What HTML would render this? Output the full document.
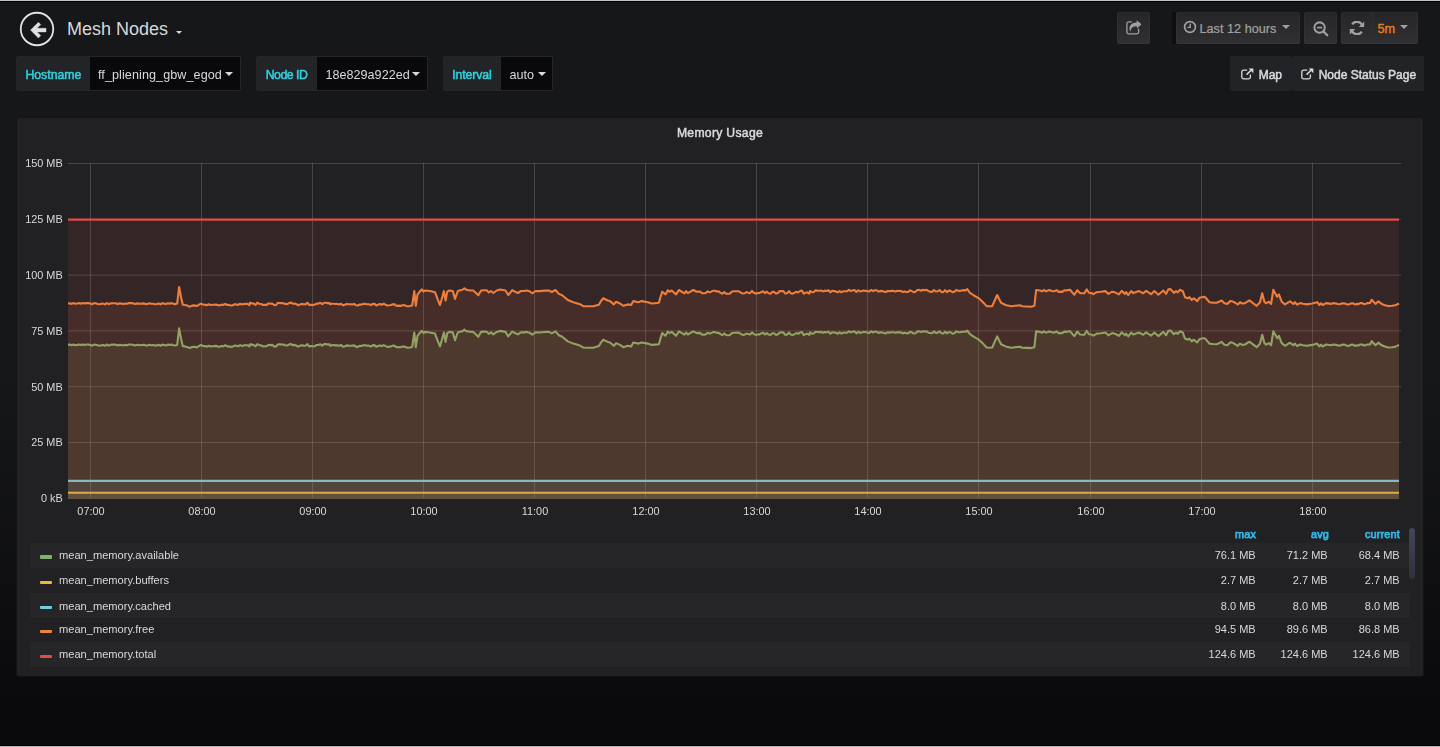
<!DOCTYPE html>
<html lang="en"><head><meta charset="utf-8"><title>Grafana - Mesh Nodes</title>
<style>
*{box-sizing:border-box;margin:0;padding:0}
html,body{width:1440px;height:747px;overflow:hidden}
body{position:relative;font-family:"Liberation Sans", sans-serif;color:#d8d9da;background:linear-gradient(to bottom,#161719 0px,#161719 380px,#0a0a0c 705px,#0a0a0c 747px);-webkit-font-smoothing:auto}
.abs{position:absolute}
.edge{position:absolute;left:0;width:1440px;height:1px}
.btn{position:absolute;height:32px;top:12px;border-radius:2px;box-shadow:inset 0 0 0 1px rgba(255,255,255,0.03);background:linear-gradient(to bottom,#262628,#303032);color:#a2a2a2;-webkit-text-stroke:0.2px #a2a2a2;font-size:12.7px;white-space:nowrap}
.btn span,.btn svg{position:absolute}
.var{will-change:transform;position:absolute;top:56px;height:35px;border:1px solid #262628;border-radius:2px;background:#232428;white-space:nowrap}
.var .lab{position:absolute;top:0;left:0;height:33px;line-height:37px;color:#32d1df;font-size:12.3px;-webkit-text-stroke:0.5px #32d1df}
.var .val{position:absolute;top:0;right:0;height:33px;background:#09090b;line-height:37px;font-size:12.6px;color:#d8d9da}
.var .val span{position:absolute;top:0}
.caret{position:absolute;width:0;height:0;border-left:4.5px solid transparent;border-right:4.5px solid transparent;border-top:4.5px solid #d8d9da}
.lnk{will-change:transform;position:absolute;top:56px;height:35px;background:#222326;color:#d8d9da;font-size:12px;-webkit-text-stroke:0.5px #d8d9da;white-space:nowrap;border-radius:2px}
.lnk span,.lnk svg{position:absolute}
#panel{position:absolute;left:16px;top:117px;width:1408px;height:560px;background:#212124;border:1px solid #131316;border-radius:3px}
.yl{position:absolute;left:0;width:62.7px;text-align:right;font-size:10.9px;will-change:transform;line-height:14px;color:#d8d9da;white-space:nowrap}
.xl{position:absolute;top:504px;width:40px;text-align:center;font-size:10.9px;will-change:transform;line-height:14px;color:#d8d9da;white-space:nowrap}
.lr{will-change:transform;position:absolute;left:30px;width:1379.6px;height:24.6px;font-size:11px;line-height:24.6px;color:#d8d9da;white-space:nowrap}
.lr i{position:absolute;left:10px;width:12px;height:3.2px;border-radius:1px}
.lr .ln{position:absolute;left:29px;font-size:11.1px}
.lr .lv{position:absolute}
.lh{will-change:transform;position:absolute;top:527px;font-size:10.9px;line-height:14px;-webkit-text-stroke:0.75px #33b5e5;letter-spacing:0.15px;color:#33b5e5}
</style></head><body>
<div class="edge" style="top:0;background:#c4c4c4"></div>
<div class="edge" style="top:1px;background:#000"></div>
<div class="edge" style="top:745px;background:#000"></div>
<div class="edge" style="top:746px;background:#b9b9b9"></div>

<!-- navbar -->
<svg class="abs" style="left:18px;top:10px" width="38" height="38" viewBox="0 0 38 38"><circle cx="19" cy="19" r="16.25" fill="none" stroke="#e3e3e3" stroke-width="1.8"/><path d="M12.6 20.1 L20.4 12.3 L22.7 14.6 L19.0 18.3 L28.0 18.3 L28.0 21.9 L19.0 21.9 L22.7 25.6 L20.4 27.9 Z" fill="#e0e0e0" stroke="#e0e0e0" stroke-width="0.5" stroke-linejoin="round"/></svg>
<div class="abs" id="title" style="left:67px;top:18px;font-size:18px;line-height:22px;color:#d8d9da;white-space:nowrap">Mesh Nodes</div>
<div class="caret" style="left:175.6px;top:30.5px;border-left-width:3.2px;border-right-width:3.2px;border-top-width:3.2px"></div>

<div class="btn" style="left:1117px;width:33px">
<svg style="left:8.6px;top:7.7px" width="16" height="15" viewBox="0 0 16 15"><path d="M10.7 0.2 L15.5 4.3 L10.9 8.4 L10.9 6.2 C7.5 6.2 5 7 4.3 11.8 C2.2 7 4.5 2.5 10.7 2.4 Z" fill="#a0a0a0"/><path d="M5.4 1.85 H2.8 A1.9 1.9 0 0 0 0.9 3.75 V12 A1.9 1.9 0 0 0 2.8 13.9 H10.7 A1.9 1.9 0 0 0 12.6 12 V9.2" fill="none" stroke="#a0a0a0" stroke-width="1.3" stroke-linecap="round"/></svg>
</div>
<div class="abs" style="left:1172px;top:12px;width:4px;height:32px;background:#0e0e10"></div>
<div class="btn" style="left:1176px;width:124px">
<svg style="left:6.8px;top:8.3px" width="14" height="14" viewBox="0 0 14 14"><circle cx="7" cy="7" r="5.4" fill="none" stroke="#a0a0a0" stroke-width="1.7"/><path d="M7.2 3.8 V7.4 H4.4" fill="none" stroke="#a0a0a0" stroke-width="1.4"/></svg>
<span id="t12" style="left:23.5px;top:1px;line-height:32px">Last 12 hours</span>
<div class="caret" style="left:106px;top:12.6px;border-top-color:#a0a0a0"></div>
</div>
<div class="btn" style="left:1304px;width:33px">
<svg style="left:8.6px;top:8.6px" width="17" height="17" viewBox="0 0 16 16"><circle cx="6.2" cy="6.2" r="4.9" fill="none" stroke="#a0a0a0" stroke-width="1.9"/><path d="M9.9 9.9 L13.4 13.4" stroke="#a0a0a0" stroke-width="2.2" stroke-linecap="round"/><path d="M3.8 6.2 H8.6" stroke="#a0a0a0" stroke-width="1.6"/></svg>
</div>
<div class="btn" style="left:1341px;width:77px">
<div class="abs" style="left:31px;top:0;width:1px;height:32px;background:#2f2f32"></div>
<svg style="left:7.7px;top:8.6px" width="16" height="14" viewBox="0 0 16 14"><g fill="none" stroke="#a0a0a0" stroke-width="2.3"><path d="M13.4 5.2 A5.6 5.6 0 0 0 3.2 3.4"/><path d="M2.6 8.8 A5.6 5.6 0 0 0 12.8 10.6"/></g><path d="M15.2 0.6 V6 H9.8 Z M0.8 13.4 V8 H6.2 Z" fill="#a0a0a0"/></svg>
<span id="t5m" style="left:36.5px;top:1px;line-height:32px;color:#ee7d1a;-webkit-text-stroke:0.35px #ee7d1a">5m</span>
<div class="caret" style="left:59.1px;top:12.6px;border-top-color:#a0a0a0"></div>
</div>

<!-- submenu -->
<div class="var" style="left:16px;width:225px"><div class="lab" style="width:73px"><span id="vl1" style="position:absolute;left:8.4px">Hostname</span></div><div class="val" style="width:150px"><span id="vv1" style="left:8px;letter-spacing:0.08px">ff_pliening_gbw_egod</span><div class="caret" style="left:134.5px;top:14.5px"></div></div></div>
<div class="var" style="left:256px;width:172px"><div class="lab" style="width:60px"><span id="vl2" style="position:absolute;left:8.7px;letter-spacing:-0.5px">Node ID</span></div><div class="val" style="width:110px"><span id="vv2" style="left:8.6px">18e829a922ed</span><div class="caret" style="left:95px;top:14.5px"></div></div></div>
<div class="var" style="left:443px;width:110px"><div class="lab" style="width:57px"><span id="vl3" style="position:absolute;left:8.3px;letter-spacing:-0.12px">Interval</span></div><div class="val" style="width:51px"><span id="vv3" style="left:8.5px">auto</span><div class="caret" style="left:36.5px;top:14.5px"></div></div></div>

<div class="lnk" style="left:1230px;width:62px">
<svg style="left:10.5px;top:12px" width="13" height="12" viewBox="0 0 13 12"><path d="M9.4 6.6 V9 A1.8 1.8 0 0 1 7.6 10.8 H2.6 A1.8 1.8 0 0 1 0.8 9 V4 A1.8 1.8 0 0 1 2.6 2.2 H6.2" fill="none" stroke="#d8d9da" stroke-width="1.3"/><path d="M5.6 6.6 L11.2 1" stroke="#d8d9da" stroke-width="1.5"/><path d="M7.6 0.4 H12.4 V5.2 Z" fill="#d8d9da"/></svg>
<span id="lmap" style="left:28.7px;top:0;line-height:38px">Map</span></div>
<div class="lnk" style="left:1291.6px;width:132.4px;border-radius:2px 0 0 2px">
<svg style="left:8.7px;top:12px" width="13" height="12" viewBox="0 0 13 12"><path d="M9.4 6.6 V9 A1.8 1.8 0 0 1 7.6 10.8 H2.6 A1.8 1.8 0 0 1 0.8 9 V4 A1.8 1.8 0 0 1 2.6 2.2 H6.2" fill="none" stroke="#d8d9da" stroke-width="1.3"/><path d="M5.6 6.6 L11.2 1" stroke="#d8d9da" stroke-width="1.5"/><path d="M7.6 0.4 H12.4 V5.2 Z" fill="#d8d9da"/></svg>
<span id="lnsp" style="left:26.7px;top:0;line-height:38px">Node Status Page</span></div>

<!-- panel -->
<div id="panel"></div>
<div class="abs" id="ptitle" style="left:620px;top:126px;width:200px;text-align:center;will-change:transform;letter-spacing:0.3px;font-size:12.2px;-webkit-text-stroke:0.5px #d8d9da;line-height:14px;color:#d8d9da">Memory Usage</div>
<svg class="abs" style="left:0;top:0" width="1440" height="747" viewBox="0 0 1440 747"><rect x="90" y="163" width="1" height="335" fill="#c8c8c8" fill-opacity="0.22"/><rect x="201" y="163" width="1" height="335" fill="#c8c8c8" fill-opacity="0.22"/><rect x="312" y="163" width="1" height="335" fill="#c8c8c8" fill-opacity="0.22"/><rect x="423" y="163" width="1" height="335" fill="#c8c8c8" fill-opacity="0.22"/><rect x="534" y="163" width="1" height="335" fill="#c8c8c8" fill-opacity="0.22"/><rect x="645" y="163" width="1" height="335" fill="#c8c8c8" fill-opacity="0.22"/><rect x="756" y="163" width="1" height="335" fill="#c8c8c8" fill-opacity="0.22"/><rect x="867" y="163" width="1" height="335" fill="#c8c8c8" fill-opacity="0.22"/><rect x="978" y="163" width="1" height="335" fill="#c8c8c8" fill-opacity="0.22"/><rect x="1090" y="163" width="1" height="335" fill="#c8c8c8" fill-opacity="0.22"/><rect x="1201" y="163" width="1" height="335" fill="#c8c8c8" fill-opacity="0.22"/><rect x="1312" y="163" width="1" height="335" fill="#c8c8c8" fill-opacity="0.22"/><rect x="68" y="163.0" width="1333.5" height="1" fill="#c8c8c8" fill-opacity="0.22"/><rect x="68" y="218.8" width="1333.5" height="1" fill="#c8c8c8" fill-opacity="0.22"/><rect x="68" y="274.6" width="1333.5" height="1" fill="#c8c8c8" fill-opacity="0.22"/><rect x="68" y="330.4" width="1333.5" height="1" fill="#c8c8c8" fill-opacity="0.22"/><rect x="68" y="386.2" width="1333.5" height="1" fill="#c8c8c8" fill-opacity="0.22"/><rect x="68" y="442.0" width="1333.5" height="1" fill="#c8c8c8" fill-opacity="0.22"/><path d="M68 344.9 L69.8 344.6 L71.7 345.3 L73.5 344.5 L75.4 345.2 L77.2 344.9 L79.1 344.5 L80.9 345.1 L82.8 344.5 L84.6 345 L86.5 344.5 L88.3 344.5 L90.2 345 L92 345.6 L93.9 344.6 L95.7 344.7 L97.6 345.3 L99.4 345.7 L101.3 345.2 L103.1 345 L105 345.8 L106.8 344.5 L108.7 345.6 L110.5 344.8 L112.4 344.6 L114.2 344.6 L116.1 344.8 L117.9 345.5 L119.8 344.7 L121.6 345.2 L123.5 345.3 L125.3 344.9 L127.2 345.2 L129 344.5 L130.9 344.5 L132.7 344.7 L134.6 345.4 L136.4 345 L138.3 344.8 L140.1 345.2 L142 345 L143.8 344.8 L145.7 345.5 L147.5 345.4 L149.4 344.7 L151.2 345.2 L153.1 345.1 L154.9 345.6 L156.8 345.4 L158.6 344.8 L160.5 345.8 L162.3 344.6 L164.2 345 L166 345.5 L167.9 344.6 L169.7 345.1 L171.6 344.5 L173.4 345.3 L175.3 345.5 L177.2 344.9 L179.1 328.4 L181 338.4 L182.8 346.2 L185 346.4 L187 347 L190 348.1 L192 347 L194 346.8 L197 347.4 L199 346 L201 345 L203 346 L205 346.1 L206.8 346.7 L208.7 345.7 L210.5 346.4 L212.4 346.2 L214.2 346.1 L216.1 345.9 L217.9 346.6 L219.8 346.8 L221.6 346 L223.5 346.3 L225.3 345.2 L227.2 346.4 L229 346.3 L230.9 346.9 L232.7 346.6 L234.6 345.6 L236.4 345.8 L238.3 346.3 L240.1 345.1 L242 345.9 L243.8 345.4 L245.7 345.3 L247.5 345.2 L249.4 346.5 L250 344.3 L251.8 344.6 L253.7 345 L255.5 346.3 L257.4 344.1 L259.2 345.2 L261.1 345.4 L263 346.4 L264.8 346.2 L266.7 346.3 L268.5 344.7 L270.4 345.1 L272.2 344.9 L274.1 346.4 L275.9 346.6 L277.8 344.3 L279.6 344.4 L281.5 344.5 L283.3 344.6 L285.2 345.3 L287 345.5 L288.9 344.6 L290.7 343.9 L292.6 345.1 L294.4 344.9 L296.3 345.5 L298.1 346.6 L300 345.8 L301.8 345.3 L303.7 345.6 L305.5 345.8 L307.4 344.1 L309.2 346.4 L311.1 346.1 L312.9 346.3 L314.8 346.1 L316.6 345 L318.5 345 L320.3 344.2 L322.2 345.7 L324 344.1 L325.9 344.1 L327.7 344.5 L329.6 344.4 L330 345.7 L331.9 345.2 L333.7 345.1 L335.6 345.4 L337.4 345.3 L339.3 345.8 L341.1 345.1 L343 346.7 L344.8 346.2 L346.7 345.4 L348.5 345.6 L350.4 345.7 L352.2 345.8 L354.1 345.3 L355.9 346.6 L357.8 346.9 L359.6 345.9 L361.5 346 L363.3 345.3 L365.2 345.3 L367 345.7 L368.9 345.6 L370.7 346.6 L372.6 345.4 L374.4 345.1 L376.3 346.8 L378.1 346.1 L380 345.4 L381.8 346.1 L383.7 345.1 L385.5 346.1 L387.4 346.9 L389.2 346.7 L391.1 346.4 L392.9 345.6 L394.8 345.8 L395 346.4 L396.9 347.3 L398.7 347 L400.6 347.3 L402.4 346.6 L404.3 346.5 L406.1 347.4 L408 347.7 L409.8 347.5 L412.2 346.9 L414.3 332.5 L415.8 347.2 L417.5 335.8 L419.5 333.4 L421.7 330.8 L423.5 333.1 L425 331.9 L428 332.2 L431 332.7 L435 333.6 L436.7 338.1 L438.3 342.4 L440 346.4 L442 339.4 L443.9 332.5 L445.6 341.9 L447.2 333.1 L449.4 331.9 L452.8 332.4 L455 340.3 L457.8 332.5 L460 331.6 L462 331.4 L464.4 329.7 L466 331 L467.8 331.4 L470 331.8 L473.3 331.9 L476 334.4 L478.3 336.7 L481.1 331.9 L484 331.6 L486.7 331.7 L488.9 333.8 L491 332.4 L493.3 334.4 L496.7 331.9 L500 330.9 L503 331.4 L505.5 331.9 L508.3 336.4 L512.2 331.6 L515 333 L517.8 334.4 L521 332.4 L524 332.4 L527 331.9 L530 332.9 L532.2 334.7 L535.5 332.4 L540 332.5 L544 332 L549 331.9 L551.7 333.4 L555.5 331.4 L558.9 335.3 L562.2 336.7 L567.8 341.4 L573.3 343.6 L580 345.6 L583.3 347.5 L588 347.7 L593.3 347.7 L598.9 346.1 L601 342.4 L603.3 339.7 L607.8 341.9 L610 342.5 L613.9 345.8 L616.1 343.1 L620 344.9 L623.3 347.2 L627.8 345.8 L631.1 346.4 L633.3 342.5 L638.3 343.6 L641.7 342.5 L647.8 343.6 L651.7 344.9 L655 344.6 L658.9 344.2 L660.5 338.4 L662.2 333.1 L665.5 335.8 L667.8 331.6 L669.4 333.1 L671.7 331.9 L676.1 335.8 L678.9 331.4 L684.4 334.7 L686.1 332.5 L687.8 334.5 L693.3 331.4 L696.7 333.1 L700 332.9 L702 334.6 L703.9 334.6 L705.7 334.4 L707.6 332.7 L709.4 333.7 L711.3 333.1 L713.1 332.1 L715 332.1 L716.8 332.9 L718.7 332.8 L720.5 334.2 L722.4 335.1 L724.2 333.4 L726.1 335 L727.9 335.2 L729.8 335.1 L731.6 333.2 L733.5 332.7 L735.3 332.7 L737.2 332.6 L739 332.7 L740.9 334 L742.7 334.9 L744.6 334.7 L746.4 333.5 L748.3 334.1 L750.1 334.6 L752 332.3 L753.8 334.1 L755.7 334.9 L757.5 334.5 L759.4 334.4 L761.2 333.5 L763.1 332.6 L764.9 334.5 L766.8 333.1 L768.6 334.6 L770.5 335.1 L772.3 333.3 L774.2 333.3 L776 335 L777.9 334.3 L779.7 332.5 L781.6 332.4 L783.4 332.5 L785.3 334.9 L787.1 334.6 L789 332.5 L790.8 334.6 L792.7 335.1 L794.5 334.1 L796.4 333.1 L798.2 333.8 L800.1 332.4 L801.9 332 L803.8 335.1 L805.6 334.1 L807.5 333.7 L809.3 335 L810 332.4 L811.9 333.6 L813.7 333.4 L815.6 331.8 L817.4 332 L819.3 332.1 L821.1 331.9 L823 332.8 L824.8 332 L826.7 332.4 L828.5 331.6 L830.4 333.7 L832.2 332.2 L834.1 332.5 L835.9 332.8 L837.8 333.7 L839.6 332.4 L841.5 333.7 L843.3 332.6 L845.2 332.7 L847 332.7 L848.9 331.3 L850.7 332.4 L852.6 331.8 L854.4 331.3 L856.3 333.4 L858.1 331.7 L860 332.5 L860 332.9 L861.9 332.4 L863.7 331.8 L865.6 332.3 L867.4 332.4 L869.3 333 L871.1 331.3 L873 332.5 L874.8 331.6 L876.7 331.7 L878.5 333 L880.4 332.3 L882.2 332.5 L884.1 333 L885.9 333.4 L887.8 332.2 L889.6 332.6 L891.5 332.3 L893.3 332.3 L895.2 332.8 L897 332.2 L898.9 332.4 L900.7 332.2 L902.6 333.4 L904.4 332.8 L906.3 333.3 L908.1 333.4 L910 331.7 L911.8 332.5 L913.7 333.5 L915.5 333.2 L917.4 331.4 L919.2 331.3 L921.1 332.1 L922.9 331.2 L924.8 331.6 L926.6 331.2 L928.5 332.7 L930.3 333 L932.2 333.3 L934 331.4 L935.9 332.9 L937.7 332.7 L939.6 331.4 L941.4 333.3 L943.3 333.5 L945.1 331.6 L947 333.5 L948.8 332 L950.7 332.3 L952.5 333.6 L954.4 333.2 L956.2 331.4 L958.1 332.1 L959.9 332.3 L961.8 331.9 L963.6 331.5 L965.5 331.8 L967.2 330.5 L970 334.2 L974 336.9 L978.9 339.7 L983 343.6 L986.7 347.5 L989.5 347.7 L992.2 347.5 L994.7 341.9 L997.2 336.4 L999 340.2 L1001.1 344.2 L1005.5 346.4 L1011.1 347.7 L1015 347.2 L1020 346.7 L1022.2 347.7 L1027 347.9 L1031.1 348.1 L1034.4 347.2 L1036.1 331.4 L1040 331.9 L1042 332.8 L1043.8 331.4 L1045.7 332.5 L1047.5 332.3 L1049.4 331.4 L1051.2 332.1 L1053.1 332.6 L1054.9 332.4 L1056.8 331.5 L1058.6 333.4 L1060.5 333 L1062.3 333.3 L1064.2 331.6 L1066 331.9 L1067.9 331.5 L1070 331.2 L1072.3 333.9 L1074.4 336.1 L1077.2 331.6 L1080 334.5 L1084.4 334.7 L1086.7 330.8 L1088.9 334.2 L1091.7 334.5 L1093.3 335.6 L1096.7 333.6 L1101 333.2 L1105.5 332.5 L1108.3 335.3 L1112.2 333.1 L1115.5 334 L1118.9 335.8 L1121.7 332.3 L1125 335.3 L1126.1 333.6 L1128.3 336.4 L1131.1 332.5 L1133.3 334.5 L1138.9 332.5 L1143.3 334.7 L1146.1 332.3 L1151.1 335.6 L1154.4 332.5 L1158.3 336.1 L1163.3 331.9 L1166.1 335.3 L1168.3 330.8 L1170.5 330.5 L1173.9 334.2 L1176.1 332.5 L1177.8 333.8 L1180 331.2 L1182.8 332.5 L1185 338.6 L1187.8 339.7 L1189.4 338.6 L1191.7 341.4 L1193.9 339.7 L1197.2 342.5 L1199.4 339.2 L1203.9 338.1 L1205.5 338.9 L1209.4 343.6 L1213 344 L1216.7 344.2 L1221.7 341.9 L1224.4 344.7 L1227.2 345.3 L1230.5 342.3 L1233.3 343.1 L1237.8 345.8 L1240 343.6 L1242.2 344.9 L1245 344.5 L1249.4 341.7 L1253.3 344.7 L1256.7 347.2 L1260 343.6 L1262.2 334.7 L1264.4 343.1 L1266.1 344.7 L1268.9 343.1 L1271.1 345.3 L1273.3 331.2 L1277.2 338.1 L1278.9 335.8 L1281.7 343.1 L1285 345.8 L1290 342.7 L1293.3 345.3 L1295 343.6 L1297.2 346.1 L1300 344.5 L1303 345.2 L1306.7 345.8 L1312.2 344.9 L1317.2 343.6 L1319.4 346.4 L1321.1 344.7 L1322.8 346.4 L1326.1 344.5 L1331.1 345.3 L1333.9 344.5 L1338 345.4 L1340 345.6 L1341.8 344.8 L1343.7 344.6 L1345.5 345.1 L1347.4 345.9 L1349.2 345.7 L1351.1 344.8 L1352.9 344.6 L1354.8 345.9 L1356.6 345.3 L1358.5 345.5 L1360.3 344.5 L1362.2 344.5 L1364 345.5 L1365.9 345.1 L1367.7 344.5 L1370 344.4 L1371.7 341.2 L1375.5 345.3 L1378.3 342.7 L1381.7 345.3 L1385 346.6 L1388.3 347.5 L1392 347.2 L1395 346.7 L1397 345.9 L1399 344.9 L1399 499 L68 499 Z" fill="#7EB26D" fill-opacity="0.1"/><path d="M68 344.9 L69.8 344.6 L71.7 345.3 L73.5 344.5 L75.4 345.2 L77.2 344.9 L79.1 344.5 L80.9 345.1 L82.8 344.5 L84.6 345 L86.5 344.5 L88.3 344.5 L90.2 345 L92 345.6 L93.9 344.6 L95.7 344.7 L97.6 345.3 L99.4 345.7 L101.3 345.2 L103.1 345 L105 345.8 L106.8 344.5 L108.7 345.6 L110.5 344.8 L112.4 344.6 L114.2 344.6 L116.1 344.8 L117.9 345.5 L119.8 344.7 L121.6 345.2 L123.5 345.3 L125.3 344.9 L127.2 345.2 L129 344.5 L130.9 344.5 L132.7 344.7 L134.6 345.4 L136.4 345 L138.3 344.8 L140.1 345.2 L142 345 L143.8 344.8 L145.7 345.5 L147.5 345.4 L149.4 344.7 L151.2 345.2 L153.1 345.1 L154.9 345.6 L156.8 345.4 L158.6 344.8 L160.5 345.8 L162.3 344.6 L164.2 345 L166 345.5 L167.9 344.6 L169.7 345.1 L171.6 344.5 L173.4 345.3 L175.3 345.5 L177.2 344.9 L179.1 328.4 L181 338.4 L182.8 346.2 L185 346.4 L187 347 L190 348.1 L192 347 L194 346.8 L197 347.4 L199 346 L201 345 L203 346 L205 346.1 L206.8 346.7 L208.7 345.7 L210.5 346.4 L212.4 346.2 L214.2 346.1 L216.1 345.9 L217.9 346.6 L219.8 346.8 L221.6 346 L223.5 346.3 L225.3 345.2 L227.2 346.4 L229 346.3 L230.9 346.9 L232.7 346.6 L234.6 345.6 L236.4 345.8 L238.3 346.3 L240.1 345.1 L242 345.9 L243.8 345.4 L245.7 345.3 L247.5 345.2 L249.4 346.5 L250 344.3 L251.8 344.6 L253.7 345 L255.5 346.3 L257.4 344.1 L259.2 345.2 L261.1 345.4 L263 346.4 L264.8 346.2 L266.7 346.3 L268.5 344.7 L270.4 345.1 L272.2 344.9 L274.1 346.4 L275.9 346.6 L277.8 344.3 L279.6 344.4 L281.5 344.5 L283.3 344.6 L285.2 345.3 L287 345.5 L288.9 344.6 L290.7 343.9 L292.6 345.1 L294.4 344.9 L296.3 345.5 L298.1 346.6 L300 345.8 L301.8 345.3 L303.7 345.6 L305.5 345.8 L307.4 344.1 L309.2 346.4 L311.1 346.1 L312.9 346.3 L314.8 346.1 L316.6 345 L318.5 345 L320.3 344.2 L322.2 345.7 L324 344.1 L325.9 344.1 L327.7 344.5 L329.6 344.4 L330 345.7 L331.9 345.2 L333.7 345.1 L335.6 345.4 L337.4 345.3 L339.3 345.8 L341.1 345.1 L343 346.7 L344.8 346.2 L346.7 345.4 L348.5 345.6 L350.4 345.7 L352.2 345.8 L354.1 345.3 L355.9 346.6 L357.8 346.9 L359.6 345.9 L361.5 346 L363.3 345.3 L365.2 345.3 L367 345.7 L368.9 345.6 L370.7 346.6 L372.6 345.4 L374.4 345.1 L376.3 346.8 L378.1 346.1 L380 345.4 L381.8 346.1 L383.7 345.1 L385.5 346.1 L387.4 346.9 L389.2 346.7 L391.1 346.4 L392.9 345.6 L394.8 345.8 L395 346.4 L396.9 347.3 L398.7 347 L400.6 347.3 L402.4 346.6 L404.3 346.5 L406.1 347.4 L408 347.7 L409.8 347.5 L412.2 346.9 L414.3 332.5 L415.8 347.2 L417.5 335.8 L419.5 333.4 L421.7 330.8 L423.5 333.1 L425 331.9 L428 332.2 L431 332.7 L435 333.6 L436.7 338.1 L438.3 342.4 L440 346.4 L442 339.4 L443.9 332.5 L445.6 341.9 L447.2 333.1 L449.4 331.9 L452.8 332.4 L455 340.3 L457.8 332.5 L460 331.6 L462 331.4 L464.4 329.7 L466 331 L467.8 331.4 L470 331.8 L473.3 331.9 L476 334.4 L478.3 336.7 L481.1 331.9 L484 331.6 L486.7 331.7 L488.9 333.8 L491 332.4 L493.3 334.4 L496.7 331.9 L500 330.9 L503 331.4 L505.5 331.9 L508.3 336.4 L512.2 331.6 L515 333 L517.8 334.4 L521 332.4 L524 332.4 L527 331.9 L530 332.9 L532.2 334.7 L535.5 332.4 L540 332.5 L544 332 L549 331.9 L551.7 333.4 L555.5 331.4 L558.9 335.3 L562.2 336.7 L567.8 341.4 L573.3 343.6 L580 345.6 L583.3 347.5 L588 347.7 L593.3 347.7 L598.9 346.1 L601 342.4 L603.3 339.7 L607.8 341.9 L610 342.5 L613.9 345.8 L616.1 343.1 L620 344.9 L623.3 347.2 L627.8 345.8 L631.1 346.4 L633.3 342.5 L638.3 343.6 L641.7 342.5 L647.8 343.6 L651.7 344.9 L655 344.6 L658.9 344.2 L660.5 338.4 L662.2 333.1 L665.5 335.8 L667.8 331.6 L669.4 333.1 L671.7 331.9 L676.1 335.8 L678.9 331.4 L684.4 334.7 L686.1 332.5 L687.8 334.5 L693.3 331.4 L696.7 333.1 L700 332.9 L702 334.6 L703.9 334.6 L705.7 334.4 L707.6 332.7 L709.4 333.7 L711.3 333.1 L713.1 332.1 L715 332.1 L716.8 332.9 L718.7 332.8 L720.5 334.2 L722.4 335.1 L724.2 333.4 L726.1 335 L727.9 335.2 L729.8 335.1 L731.6 333.2 L733.5 332.7 L735.3 332.7 L737.2 332.6 L739 332.7 L740.9 334 L742.7 334.9 L744.6 334.7 L746.4 333.5 L748.3 334.1 L750.1 334.6 L752 332.3 L753.8 334.1 L755.7 334.9 L757.5 334.5 L759.4 334.4 L761.2 333.5 L763.1 332.6 L764.9 334.5 L766.8 333.1 L768.6 334.6 L770.5 335.1 L772.3 333.3 L774.2 333.3 L776 335 L777.9 334.3 L779.7 332.5 L781.6 332.4 L783.4 332.5 L785.3 334.9 L787.1 334.6 L789 332.5 L790.8 334.6 L792.7 335.1 L794.5 334.1 L796.4 333.1 L798.2 333.8 L800.1 332.4 L801.9 332 L803.8 335.1 L805.6 334.1 L807.5 333.7 L809.3 335 L810 332.4 L811.9 333.6 L813.7 333.4 L815.6 331.8 L817.4 332 L819.3 332.1 L821.1 331.9 L823 332.8 L824.8 332 L826.7 332.4 L828.5 331.6 L830.4 333.7 L832.2 332.2 L834.1 332.5 L835.9 332.8 L837.8 333.7 L839.6 332.4 L841.5 333.7 L843.3 332.6 L845.2 332.7 L847 332.7 L848.9 331.3 L850.7 332.4 L852.6 331.8 L854.4 331.3 L856.3 333.4 L858.1 331.7 L860 332.5 L860 332.9 L861.9 332.4 L863.7 331.8 L865.6 332.3 L867.4 332.4 L869.3 333 L871.1 331.3 L873 332.5 L874.8 331.6 L876.7 331.7 L878.5 333 L880.4 332.3 L882.2 332.5 L884.1 333 L885.9 333.4 L887.8 332.2 L889.6 332.6 L891.5 332.3 L893.3 332.3 L895.2 332.8 L897 332.2 L898.9 332.4 L900.7 332.2 L902.6 333.4 L904.4 332.8 L906.3 333.3 L908.1 333.4 L910 331.7 L911.8 332.5 L913.7 333.5 L915.5 333.2 L917.4 331.4 L919.2 331.3 L921.1 332.1 L922.9 331.2 L924.8 331.6 L926.6 331.2 L928.5 332.7 L930.3 333 L932.2 333.3 L934 331.4 L935.9 332.9 L937.7 332.7 L939.6 331.4 L941.4 333.3 L943.3 333.5 L945.1 331.6 L947 333.5 L948.8 332 L950.7 332.3 L952.5 333.6 L954.4 333.2 L956.2 331.4 L958.1 332.1 L959.9 332.3 L961.8 331.9 L963.6 331.5 L965.5 331.8 L967.2 330.5 L970 334.2 L974 336.9 L978.9 339.7 L983 343.6 L986.7 347.5 L989.5 347.7 L992.2 347.5 L994.7 341.9 L997.2 336.4 L999 340.2 L1001.1 344.2 L1005.5 346.4 L1011.1 347.7 L1015 347.2 L1020 346.7 L1022.2 347.7 L1027 347.9 L1031.1 348.1 L1034.4 347.2 L1036.1 331.4 L1040 331.9 L1042 332.8 L1043.8 331.4 L1045.7 332.5 L1047.5 332.3 L1049.4 331.4 L1051.2 332.1 L1053.1 332.6 L1054.9 332.4 L1056.8 331.5 L1058.6 333.4 L1060.5 333 L1062.3 333.3 L1064.2 331.6 L1066 331.9 L1067.9 331.5 L1070 331.2 L1072.3 333.9 L1074.4 336.1 L1077.2 331.6 L1080 334.5 L1084.4 334.7 L1086.7 330.8 L1088.9 334.2 L1091.7 334.5 L1093.3 335.6 L1096.7 333.6 L1101 333.2 L1105.5 332.5 L1108.3 335.3 L1112.2 333.1 L1115.5 334 L1118.9 335.8 L1121.7 332.3 L1125 335.3 L1126.1 333.6 L1128.3 336.4 L1131.1 332.5 L1133.3 334.5 L1138.9 332.5 L1143.3 334.7 L1146.1 332.3 L1151.1 335.6 L1154.4 332.5 L1158.3 336.1 L1163.3 331.9 L1166.1 335.3 L1168.3 330.8 L1170.5 330.5 L1173.9 334.2 L1176.1 332.5 L1177.8 333.8 L1180 331.2 L1182.8 332.5 L1185 338.6 L1187.8 339.7 L1189.4 338.6 L1191.7 341.4 L1193.9 339.7 L1197.2 342.5 L1199.4 339.2 L1203.9 338.1 L1205.5 338.9 L1209.4 343.6 L1213 344 L1216.7 344.2 L1221.7 341.9 L1224.4 344.7 L1227.2 345.3 L1230.5 342.3 L1233.3 343.1 L1237.8 345.8 L1240 343.6 L1242.2 344.9 L1245 344.5 L1249.4 341.7 L1253.3 344.7 L1256.7 347.2 L1260 343.6 L1262.2 334.7 L1264.4 343.1 L1266.1 344.7 L1268.9 343.1 L1271.1 345.3 L1273.3 331.2 L1277.2 338.1 L1278.9 335.8 L1281.7 343.1 L1285 345.8 L1290 342.7 L1293.3 345.3 L1295 343.6 L1297.2 346.1 L1300 344.5 L1303 345.2 L1306.7 345.8 L1312.2 344.9 L1317.2 343.6 L1319.4 346.4 L1321.1 344.7 L1322.8 346.4 L1326.1 344.5 L1331.1 345.3 L1333.9 344.5 L1338 345.4 L1340 345.6 L1341.8 344.8 L1343.7 344.6 L1345.5 345.1 L1347.4 345.9 L1349.2 345.7 L1351.1 344.8 L1352.9 344.6 L1354.8 345.9 L1356.6 345.3 L1358.5 345.5 L1360.3 344.5 L1362.2 344.5 L1364 345.5 L1365.9 345.1 L1367.7 344.5 L1370 344.4 L1371.7 341.2 L1375.5 345.3 L1378.3 342.7 L1381.7 345.3 L1385 346.6 L1388.3 347.5 L1392 347.2 L1395 346.7 L1397 345.9 L1399 344.9" fill="none" stroke="#7EB26D" stroke-width="2.1" stroke-linejoin="round"/><path d="M68 492.7 L1399 492.7 L1399 499 L68 499 Z" fill="#EAB839" fill-opacity="0.1"/><path d="M68 492.7 L1399 492.7" fill="none" stroke="#EAB839" stroke-width="2.1" stroke-linejoin="round"/><path d="M68 480.9 L1399 480.9 L1399 499 L68 499 Z" fill="#6ED0E0" fill-opacity="0.1"/><path d="M68 480.9 L1399 480.9" fill="none" stroke="#6ED0E0" stroke-width="2.1" stroke-linejoin="round"/><path d="M68 303.5 L69.8 303.2 L71.7 303.9 L73.5 303.1 L75.4 303.8 L77.2 303.5 L79.1 303.1 L80.9 303.7 L82.8 303.1 L84.6 303.6 L86.5 303.1 L88.3 303.1 L90.2 303.6 L92 304.2 L93.9 303.2 L95.7 303.3 L97.6 303.9 L99.4 304.3 L101.3 303.8 L103.1 303.6 L105 304.4 L106.8 303.1 L108.7 304.2 L110.5 303.4 L112.4 303.2 L114.2 303.2 L116.1 303.4 L117.9 304.1 L119.8 303.3 L121.6 303.8 L123.5 303.9 L125.3 303.5 L127.2 303.8 L129 303.1 L130.9 303.1 L132.7 303.3 L134.6 304 L136.4 303.6 L138.3 303.4 L140.1 303.8 L142 303.6 L143.8 303.4 L145.7 304.1 L147.5 304 L149.4 303.3 L151.2 303.8 L153.1 303.7 L154.9 304.2 L156.8 304 L158.6 303.4 L160.5 304.4 L162.3 303.2 L164.2 303.6 L166 304.1 L167.9 303.2 L169.7 303.7 L171.6 303.1 L173.4 303.9 L175.3 304.1 L177.2 303.5 L179.1 287 L181 297 L182.8 304.8 L185 305 L187 305.6 L190 306.7 L192 305.6 L194 305.4 L197 306 L199 304.6 L201 303.6 L203 304.6 L205 304.7 L206.8 305.3 L208.7 304.3 L210.5 305 L212.4 304.8 L214.2 304.7 L216.1 304.5 L217.9 305.2 L219.8 305.4 L221.6 304.6 L223.5 304.9 L225.3 303.8 L227.2 305 L229 304.9 L230.9 305.5 L232.7 305.2 L234.6 304.2 L236.4 304.4 L238.3 304.9 L240.1 303.7 L242 304.5 L243.8 304 L245.7 303.9 L247.5 303.8 L249.4 305.1 L250 302.9 L251.8 303.2 L253.7 303.6 L255.5 304.9 L257.4 302.7 L259.2 303.8 L261.1 304 L263 305 L264.8 304.8 L266.7 304.9 L268.5 303.3 L270.4 303.7 L272.2 303.5 L274.1 305 L275.9 305.2 L277.8 302.9 L279.6 303 L281.5 303.1 L283.3 303.2 L285.2 303.9 L287 304.1 L288.9 303.2 L290.7 302.5 L292.6 303.7 L294.4 303.5 L296.3 304.1 L298.1 305.2 L300 304.4 L301.8 303.9 L303.7 304.2 L305.5 304.4 L307.4 302.7 L309.2 305 L311.1 304.7 L312.9 304.9 L314.8 304.7 L316.6 303.6 L318.5 303.6 L320.3 302.8 L322.2 304.3 L324 302.7 L325.9 302.7 L327.7 303.1 L329.6 303 L330 304.3 L331.9 303.8 L333.7 303.7 L335.6 304 L337.4 303.9 L339.3 304.4 L341.1 303.7 L343 305.3 L344.8 304.8 L346.7 304 L348.5 304.2 L350.4 304.3 L352.2 304.4 L354.1 303.9 L355.9 305.2 L357.8 305.5 L359.6 304.5 L361.5 304.6 L363.3 303.9 L365.2 303.9 L367 304.3 L368.9 304.2 L370.7 305.2 L372.6 304 L374.4 303.7 L376.3 305.4 L378.1 304.7 L380 304 L381.8 304.7 L383.7 303.7 L385.5 304.7 L387.4 305.5 L389.2 305.3 L391.1 305 L392.9 304.2 L394.8 304.4 L395 305 L396.9 305.9 L398.7 305.6 L400.6 305.9 L402.4 305.2 L404.3 305.1 L406.1 306 L408 306.3 L409.8 306.1 L412.2 305.5 L414.3 291.1 L415.8 305.8 L417.5 294.4 L419.5 292 L421.7 289.4 L423.5 291.7 L425 290.5 L428 290.8 L431 291.3 L435 292.2 L436.7 296.7 L438.3 301 L440 305 L442 298 L443.9 291.1 L445.6 300.5 L447.2 291.7 L449.4 290.5 L452.8 291 L455 298.9 L457.8 291.1 L460 290.2 L462 290 L464.4 288.3 L466 289.6 L467.8 290 L470 290.4 L473.3 290.5 L476 293 L478.3 295.3 L481.1 290.5 L484 290.2 L486.7 290.3 L488.9 292.4 L491 291 L493.3 293 L496.7 290.5 L500 289.5 L503 290 L505.5 290.5 L508.3 295 L512.2 290.2 L515 291.6 L517.8 293 L521 291 L524 291 L527 290.5 L530 291.5 L532.2 293.3 L535.5 291 L540 291.1 L544 290.6 L549 290.5 L551.7 292 L555.5 290 L558.9 293.9 L562.2 295.3 L567.8 300 L573.3 302.2 L580 304.2 L583.3 306.1 L588 306.3 L593.3 306.3 L598.9 304.7 L601 301 L603.3 298.3 L607.8 300.5 L610 301.1 L613.9 304.4 L616.1 301.7 L620 303.5 L623.3 305.8 L627.8 304.4 L631.1 305 L633.3 301.1 L638.3 302.2 L641.7 301.1 L647.8 302.2 L651.7 303.5 L655 303.2 L658.9 302.8 L660.5 297 L662.2 291.7 L665.5 294.4 L667.8 290.2 L669.4 291.7 L671.7 290.5 L676.1 294.4 L678.9 290 L684.4 293.3 L686.1 291.1 L687.8 293.1 L693.3 290 L696.7 291.7 L700 291.5 L702 293.2 L703.9 293.2 L705.7 293 L707.6 291.3 L709.4 292.3 L711.3 291.7 L713.1 290.7 L715 290.7 L716.8 291.5 L718.7 291.4 L720.5 292.8 L722.4 293.7 L724.2 292 L726.1 293.6 L727.9 293.8 L729.8 293.7 L731.6 291.8 L733.5 291.3 L735.3 291.3 L737.2 291.2 L739 291.3 L740.9 292.6 L742.7 293.5 L744.6 293.3 L746.4 292.1 L748.3 292.7 L750.1 293.2 L752 290.9 L753.8 292.7 L755.7 293.5 L757.5 293.1 L759.4 293 L761.2 292.1 L763.1 291.2 L764.9 293.1 L766.8 291.7 L768.6 293.2 L770.5 293.7 L772.3 291.9 L774.2 291.9 L776 293.6 L777.9 292.9 L779.7 291.1 L781.6 291 L783.4 291.1 L785.3 293.5 L787.1 293.2 L789 291.1 L790.8 293.2 L792.7 293.7 L794.5 292.7 L796.4 291.7 L798.2 292.4 L800.1 291 L801.9 290.6 L803.8 293.7 L805.6 292.7 L807.5 292.3 L809.3 293.6 L810 291 L811.9 292.2 L813.7 292 L815.6 290.4 L817.4 290.6 L819.3 290.7 L821.1 290.5 L823 291.4 L824.8 290.6 L826.7 291 L828.5 290.2 L830.4 292.3 L832.2 290.8 L834.1 291.1 L835.9 291.4 L837.8 292.3 L839.6 291 L841.5 292.3 L843.3 291.2 L845.2 291.3 L847 291.3 L848.9 289.9 L850.7 291 L852.6 290.4 L854.4 289.9 L856.3 292 L858.1 290.3 L860 291.1 L860 291.5 L861.9 291 L863.7 290.4 L865.6 290.9 L867.4 291 L869.3 291.6 L871.1 289.9 L873 291.1 L874.8 290.2 L876.7 290.3 L878.5 291.6 L880.4 290.9 L882.2 291.1 L884.1 291.6 L885.9 292 L887.8 290.8 L889.6 291.2 L891.5 290.9 L893.3 290.9 L895.2 291.4 L897 290.8 L898.9 291 L900.7 290.8 L902.6 292 L904.4 291.4 L906.3 291.9 L908.1 292 L910 290.3 L911.8 291.1 L913.7 292.1 L915.5 291.8 L917.4 290 L919.2 289.9 L921.1 290.7 L922.9 289.8 L924.8 290.2 L926.6 289.8 L928.5 291.3 L930.3 291.6 L932.2 291.9 L934 290 L935.9 291.5 L937.7 291.3 L939.6 290 L941.4 291.9 L943.3 292.1 L945.1 290.2 L947 292.1 L948.8 290.6 L950.7 290.9 L952.5 292.2 L954.4 291.8 L956.2 290 L958.1 290.7 L959.9 290.9 L961.8 290.5 L963.6 290.1 L965.5 290.4 L967.2 289.1 L970 292.8 L974 295.5 L978.9 298.3 L983 302.2 L986.7 306.1 L989.5 306.3 L992.2 306.1 L994.7 300.5 L997.2 295 L999 298.8 L1001.1 302.8 L1005.5 305 L1011.1 306.3 L1015 305.8 L1020 305.3 L1022.2 306.3 L1027 306.5 L1031.1 306.7 L1034.4 305.8 L1036.1 290 L1040 290.5 L1042 291.4 L1043.8 290 L1045.7 291.1 L1047.5 290.9 L1049.4 290 L1051.2 290.7 L1053.1 291.2 L1054.9 291 L1056.8 290.1 L1058.6 292 L1060.5 291.6 L1062.3 291.9 L1064.2 290.2 L1066 290.5 L1067.9 290.1 L1070 289.8 L1072.3 292.5 L1074.4 294.7 L1077.2 290.2 L1080 293.1 L1084.4 293.3 L1086.7 289.4 L1088.9 292.8 L1091.7 293.1 L1093.3 294.2 L1096.7 292.2 L1101 291.8 L1105.5 291.1 L1108.3 293.9 L1112.2 291.7 L1115.5 292.6 L1118.9 294.4 L1121.7 290.9 L1125 293.9 L1126.1 292.2 L1128.3 295 L1131.1 291.1 L1133.3 293.1 L1138.9 291.1 L1143.3 293.3 L1146.1 290.9 L1151.1 294.2 L1154.4 291.1 L1158.3 294.7 L1163.3 290.5 L1166.1 293.9 L1168.3 289.4 L1170.5 289.1 L1173.9 292.8 L1176.1 291.1 L1177.8 292.4 L1180 289.8 L1182.8 291.1 L1185 297.2 L1187.8 298.3 L1189.4 297.2 L1191.7 300 L1193.9 298.3 L1197.2 301.1 L1199.4 297.8 L1203.9 296.7 L1205.5 297.5 L1209.4 302.2 L1213 302.6 L1216.7 302.8 L1221.7 300.5 L1224.4 303.3 L1227.2 303.9 L1230.5 300.9 L1233.3 301.7 L1237.8 304.4 L1240 302.2 L1242.2 303.5 L1245 303.1 L1249.4 300.3 L1253.3 303.3 L1256.7 305.8 L1260 302.2 L1262.2 293.3 L1264.4 301.7 L1266.1 303.3 L1268.9 301.7 L1271.1 303.9 L1273.3 289.8 L1277.2 296.7 L1278.9 294.4 L1281.7 301.7 L1285 304.4 L1290 301.3 L1293.3 303.9 L1295 302.2 L1297.2 304.7 L1300 303.1 L1303 303.8 L1306.7 304.4 L1312.2 303.5 L1317.2 302.2 L1319.4 305 L1321.1 303.3 L1322.8 305 L1326.1 303.1 L1331.1 303.9 L1333.9 303.1 L1338 304 L1340 304.2 L1341.8 303.4 L1343.7 303.2 L1345.5 303.7 L1347.4 304.5 L1349.2 304.3 L1351.1 303.4 L1352.9 303.2 L1354.8 304.5 L1356.6 303.9 L1358.5 304.1 L1360.3 303.1 L1362.2 303.1 L1364 304.1 L1365.9 303.7 L1367.7 303.1 L1370 303 L1371.7 299.8 L1375.5 303.9 L1378.3 301.3 L1381.7 303.9 L1385 305.2 L1388.3 306.1 L1392 305.8 L1395 305.3 L1397 304.5 L1399 303.5 L1399 499 L68 499 Z" fill="#EF843C" fill-opacity="0.1"/><path d="M68 303.5 L69.8 303.2 L71.7 303.9 L73.5 303.1 L75.4 303.8 L77.2 303.5 L79.1 303.1 L80.9 303.7 L82.8 303.1 L84.6 303.6 L86.5 303.1 L88.3 303.1 L90.2 303.6 L92 304.2 L93.9 303.2 L95.7 303.3 L97.6 303.9 L99.4 304.3 L101.3 303.8 L103.1 303.6 L105 304.4 L106.8 303.1 L108.7 304.2 L110.5 303.4 L112.4 303.2 L114.2 303.2 L116.1 303.4 L117.9 304.1 L119.8 303.3 L121.6 303.8 L123.5 303.9 L125.3 303.5 L127.2 303.8 L129 303.1 L130.9 303.1 L132.7 303.3 L134.6 304 L136.4 303.6 L138.3 303.4 L140.1 303.8 L142 303.6 L143.8 303.4 L145.7 304.1 L147.5 304 L149.4 303.3 L151.2 303.8 L153.1 303.7 L154.9 304.2 L156.8 304 L158.6 303.4 L160.5 304.4 L162.3 303.2 L164.2 303.6 L166 304.1 L167.9 303.2 L169.7 303.7 L171.6 303.1 L173.4 303.9 L175.3 304.1 L177.2 303.5 L179.1 287 L181 297 L182.8 304.8 L185 305 L187 305.6 L190 306.7 L192 305.6 L194 305.4 L197 306 L199 304.6 L201 303.6 L203 304.6 L205 304.7 L206.8 305.3 L208.7 304.3 L210.5 305 L212.4 304.8 L214.2 304.7 L216.1 304.5 L217.9 305.2 L219.8 305.4 L221.6 304.6 L223.5 304.9 L225.3 303.8 L227.2 305 L229 304.9 L230.9 305.5 L232.7 305.2 L234.6 304.2 L236.4 304.4 L238.3 304.9 L240.1 303.7 L242 304.5 L243.8 304 L245.7 303.9 L247.5 303.8 L249.4 305.1 L250 302.9 L251.8 303.2 L253.7 303.6 L255.5 304.9 L257.4 302.7 L259.2 303.8 L261.1 304 L263 305 L264.8 304.8 L266.7 304.9 L268.5 303.3 L270.4 303.7 L272.2 303.5 L274.1 305 L275.9 305.2 L277.8 302.9 L279.6 303 L281.5 303.1 L283.3 303.2 L285.2 303.9 L287 304.1 L288.9 303.2 L290.7 302.5 L292.6 303.7 L294.4 303.5 L296.3 304.1 L298.1 305.2 L300 304.4 L301.8 303.9 L303.7 304.2 L305.5 304.4 L307.4 302.7 L309.2 305 L311.1 304.7 L312.9 304.9 L314.8 304.7 L316.6 303.6 L318.5 303.6 L320.3 302.8 L322.2 304.3 L324 302.7 L325.9 302.7 L327.7 303.1 L329.6 303 L330 304.3 L331.9 303.8 L333.7 303.7 L335.6 304 L337.4 303.9 L339.3 304.4 L341.1 303.7 L343 305.3 L344.8 304.8 L346.7 304 L348.5 304.2 L350.4 304.3 L352.2 304.4 L354.1 303.9 L355.9 305.2 L357.8 305.5 L359.6 304.5 L361.5 304.6 L363.3 303.9 L365.2 303.9 L367 304.3 L368.9 304.2 L370.7 305.2 L372.6 304 L374.4 303.7 L376.3 305.4 L378.1 304.7 L380 304 L381.8 304.7 L383.7 303.7 L385.5 304.7 L387.4 305.5 L389.2 305.3 L391.1 305 L392.9 304.2 L394.8 304.4 L395 305 L396.9 305.9 L398.7 305.6 L400.6 305.9 L402.4 305.2 L404.3 305.1 L406.1 306 L408 306.3 L409.8 306.1 L412.2 305.5 L414.3 291.1 L415.8 305.8 L417.5 294.4 L419.5 292 L421.7 289.4 L423.5 291.7 L425 290.5 L428 290.8 L431 291.3 L435 292.2 L436.7 296.7 L438.3 301 L440 305 L442 298 L443.9 291.1 L445.6 300.5 L447.2 291.7 L449.4 290.5 L452.8 291 L455 298.9 L457.8 291.1 L460 290.2 L462 290 L464.4 288.3 L466 289.6 L467.8 290 L470 290.4 L473.3 290.5 L476 293 L478.3 295.3 L481.1 290.5 L484 290.2 L486.7 290.3 L488.9 292.4 L491 291 L493.3 293 L496.7 290.5 L500 289.5 L503 290 L505.5 290.5 L508.3 295 L512.2 290.2 L515 291.6 L517.8 293 L521 291 L524 291 L527 290.5 L530 291.5 L532.2 293.3 L535.5 291 L540 291.1 L544 290.6 L549 290.5 L551.7 292 L555.5 290 L558.9 293.9 L562.2 295.3 L567.8 300 L573.3 302.2 L580 304.2 L583.3 306.1 L588 306.3 L593.3 306.3 L598.9 304.7 L601 301 L603.3 298.3 L607.8 300.5 L610 301.1 L613.9 304.4 L616.1 301.7 L620 303.5 L623.3 305.8 L627.8 304.4 L631.1 305 L633.3 301.1 L638.3 302.2 L641.7 301.1 L647.8 302.2 L651.7 303.5 L655 303.2 L658.9 302.8 L660.5 297 L662.2 291.7 L665.5 294.4 L667.8 290.2 L669.4 291.7 L671.7 290.5 L676.1 294.4 L678.9 290 L684.4 293.3 L686.1 291.1 L687.8 293.1 L693.3 290 L696.7 291.7 L700 291.5 L702 293.2 L703.9 293.2 L705.7 293 L707.6 291.3 L709.4 292.3 L711.3 291.7 L713.1 290.7 L715 290.7 L716.8 291.5 L718.7 291.4 L720.5 292.8 L722.4 293.7 L724.2 292 L726.1 293.6 L727.9 293.8 L729.8 293.7 L731.6 291.8 L733.5 291.3 L735.3 291.3 L737.2 291.2 L739 291.3 L740.9 292.6 L742.7 293.5 L744.6 293.3 L746.4 292.1 L748.3 292.7 L750.1 293.2 L752 290.9 L753.8 292.7 L755.7 293.5 L757.5 293.1 L759.4 293 L761.2 292.1 L763.1 291.2 L764.9 293.1 L766.8 291.7 L768.6 293.2 L770.5 293.7 L772.3 291.9 L774.2 291.9 L776 293.6 L777.9 292.9 L779.7 291.1 L781.6 291 L783.4 291.1 L785.3 293.5 L787.1 293.2 L789 291.1 L790.8 293.2 L792.7 293.7 L794.5 292.7 L796.4 291.7 L798.2 292.4 L800.1 291 L801.9 290.6 L803.8 293.7 L805.6 292.7 L807.5 292.3 L809.3 293.6 L810 291 L811.9 292.2 L813.7 292 L815.6 290.4 L817.4 290.6 L819.3 290.7 L821.1 290.5 L823 291.4 L824.8 290.6 L826.7 291 L828.5 290.2 L830.4 292.3 L832.2 290.8 L834.1 291.1 L835.9 291.4 L837.8 292.3 L839.6 291 L841.5 292.3 L843.3 291.2 L845.2 291.3 L847 291.3 L848.9 289.9 L850.7 291 L852.6 290.4 L854.4 289.9 L856.3 292 L858.1 290.3 L860 291.1 L860 291.5 L861.9 291 L863.7 290.4 L865.6 290.9 L867.4 291 L869.3 291.6 L871.1 289.9 L873 291.1 L874.8 290.2 L876.7 290.3 L878.5 291.6 L880.4 290.9 L882.2 291.1 L884.1 291.6 L885.9 292 L887.8 290.8 L889.6 291.2 L891.5 290.9 L893.3 290.9 L895.2 291.4 L897 290.8 L898.9 291 L900.7 290.8 L902.6 292 L904.4 291.4 L906.3 291.9 L908.1 292 L910 290.3 L911.8 291.1 L913.7 292.1 L915.5 291.8 L917.4 290 L919.2 289.9 L921.1 290.7 L922.9 289.8 L924.8 290.2 L926.6 289.8 L928.5 291.3 L930.3 291.6 L932.2 291.9 L934 290 L935.9 291.5 L937.7 291.3 L939.6 290 L941.4 291.9 L943.3 292.1 L945.1 290.2 L947 292.1 L948.8 290.6 L950.7 290.9 L952.5 292.2 L954.4 291.8 L956.2 290 L958.1 290.7 L959.9 290.9 L961.8 290.5 L963.6 290.1 L965.5 290.4 L967.2 289.1 L970 292.8 L974 295.5 L978.9 298.3 L983 302.2 L986.7 306.1 L989.5 306.3 L992.2 306.1 L994.7 300.5 L997.2 295 L999 298.8 L1001.1 302.8 L1005.5 305 L1011.1 306.3 L1015 305.8 L1020 305.3 L1022.2 306.3 L1027 306.5 L1031.1 306.7 L1034.4 305.8 L1036.1 290 L1040 290.5 L1042 291.4 L1043.8 290 L1045.7 291.1 L1047.5 290.9 L1049.4 290 L1051.2 290.7 L1053.1 291.2 L1054.9 291 L1056.8 290.1 L1058.6 292 L1060.5 291.6 L1062.3 291.9 L1064.2 290.2 L1066 290.5 L1067.9 290.1 L1070 289.8 L1072.3 292.5 L1074.4 294.7 L1077.2 290.2 L1080 293.1 L1084.4 293.3 L1086.7 289.4 L1088.9 292.8 L1091.7 293.1 L1093.3 294.2 L1096.7 292.2 L1101 291.8 L1105.5 291.1 L1108.3 293.9 L1112.2 291.7 L1115.5 292.6 L1118.9 294.4 L1121.7 290.9 L1125 293.9 L1126.1 292.2 L1128.3 295 L1131.1 291.1 L1133.3 293.1 L1138.9 291.1 L1143.3 293.3 L1146.1 290.9 L1151.1 294.2 L1154.4 291.1 L1158.3 294.7 L1163.3 290.5 L1166.1 293.9 L1168.3 289.4 L1170.5 289.1 L1173.9 292.8 L1176.1 291.1 L1177.8 292.4 L1180 289.8 L1182.8 291.1 L1185 297.2 L1187.8 298.3 L1189.4 297.2 L1191.7 300 L1193.9 298.3 L1197.2 301.1 L1199.4 297.8 L1203.9 296.7 L1205.5 297.5 L1209.4 302.2 L1213 302.6 L1216.7 302.8 L1221.7 300.5 L1224.4 303.3 L1227.2 303.9 L1230.5 300.9 L1233.3 301.7 L1237.8 304.4 L1240 302.2 L1242.2 303.5 L1245 303.1 L1249.4 300.3 L1253.3 303.3 L1256.7 305.8 L1260 302.2 L1262.2 293.3 L1264.4 301.7 L1266.1 303.3 L1268.9 301.7 L1271.1 303.9 L1273.3 289.8 L1277.2 296.7 L1278.9 294.4 L1281.7 301.7 L1285 304.4 L1290 301.3 L1293.3 303.9 L1295 302.2 L1297.2 304.7 L1300 303.1 L1303 303.8 L1306.7 304.4 L1312.2 303.5 L1317.2 302.2 L1319.4 305 L1321.1 303.3 L1322.8 305 L1326.1 303.1 L1331.1 303.9 L1333.9 303.1 L1338 304 L1340 304.2 L1341.8 303.4 L1343.7 303.2 L1345.5 303.7 L1347.4 304.5 L1349.2 304.3 L1351.1 303.4 L1352.9 303.2 L1354.8 304.5 L1356.6 303.9 L1358.5 304.1 L1360.3 303.1 L1362.2 303.1 L1364 304.1 L1365.9 303.7 L1367.7 303.1 L1370 303 L1371.7 299.8 L1375.5 303.9 L1378.3 301.3 L1381.7 303.9 L1385 305.2 L1388.3 306.1 L1392 305.8 L1395 305.3 L1397 304.5 L1399 303.5" fill="none" stroke="#EF843C" stroke-width="2.1" stroke-linejoin="round"/><path d="M68 219.6 L1399 219.6 L1399 499 L68 499 Z" fill="#E24D42" fill-opacity="0.1"/><path d="M68 219.6 L1399 219.6" fill="none" stroke="#E24D42" stroke-width="2.1" stroke-linejoin="round"/></svg>
<div class="yl" style="top:156px">150 MB</div><div class="yl" style="top:212px">125 MB</div><div class="yl" style="top:268px">100 MB</div><div class="yl" style="top:324px">75 MB</div><div class="yl" style="top:380px">50 MB</div><div class="yl" style="top:435px">25 MB</div><div class="yl" style="top:490.5px">0 kB</div><div class="xl" style="left:70.5px">07:00</div><div class="xl" style="left:181.5px">08:00</div><div class="xl" style="left:292.5px">09:00</div><div class="xl" style="left:403.5px">10:00</div><div class="xl" style="left:514.5px">11:00</div><div class="xl" style="left:625.5px">12:00</div><div class="xl" style="left:736.5px">13:00</div><div class="xl" style="left:847.5px">14:00</div><div class="xl" style="left:958.5px">15:00</div><div class="xl" style="left:1070.5px">16:00</div><div class="xl" style="left:1181.5px">17:00</div><div class="xl" style="left:1292.5px">18:00</div>
<div class="lh" style="right:184.4px" id="hmax">max</div>
<div class="lh" style="right:111.2px">avg</div>
<div class="lh" style="right:40.4px">current</div>
<div class="lr" style="top:543.3px;background:#262628"><i style="background:#7EB26D;top:12.4px"></i><span class="ln" style="top:-0.3px">mean_memory.available</span><span class="lv" style="top:-0.3px;right:153.9px">76.1 MB</span><span class="lv" style="top:-0.3px;right:81.9px">71.2 MB</span><span class="lv" style="top:-0.3px;right:9.9px">68.4 MB</span></div><div class="lr" style="top:567.9px;background:transparent"><i style="background:#EAB839;top:12.8px"></i><span class="ln" style="top:0.1px">mean_memory.buffers</span><span class="lv" style="top:0.1px;right:153.9px">2.7 MB</span><span class="lv" style="top:0.1px;right:81.9px">2.7 MB</span><span class="lv" style="top:0.1px;right:9.9px">2.7 MB</span></div><div class="lr" style="top:592.5px;background:#262628"><i style="background:#6ED0E0;top:13.2px"></i><span class="ln" style="top:0.5px">mean_memory.cached</span><span class="lv" style="top:0.5px;right:153.9px">8.0 MB</span><span class="lv" style="top:0.5px;right:81.9px">8.0 MB</span><span class="lv" style="top:0.5px;right:9.9px">8.0 MB</span></div><div class="lr" style="top:617.1px;background:transparent"><i style="background:#EF843C;top:12.6px"></i><span class="ln" style="top:-0.1px">mean_memory.free</span><span class="lv" style="top:-0.1px;right:153.9px">94.5 MB</span><span class="lv" style="top:-0.1px;right:81.9px">89.6 MB</span><span class="lv" style="top:-0.1px;right:9.9px">86.8 MB</span></div><div class="lr" style="top:641.7px;background:#262628"><i style="background:#E24D42;top:13.0px"></i><span class="ln" style="top:0.3px">mean_memory.total</span><span class="lv" style="top:0.3px;right:153.9px">124.6 MB</span><span class="lv" style="top:0.3px;right:81.9px">124.6 MB</span><span class="lv" style="top:0.3px;right:9.9px">124.6 MB</span></div>
<div class="abs" style="left:1409.2px;top:527.8px;width:5.8px;height:51px;border-radius:3px;background:linear-gradient(to bottom,#44465a,#2e2f3a)"></div>
</body></html>
